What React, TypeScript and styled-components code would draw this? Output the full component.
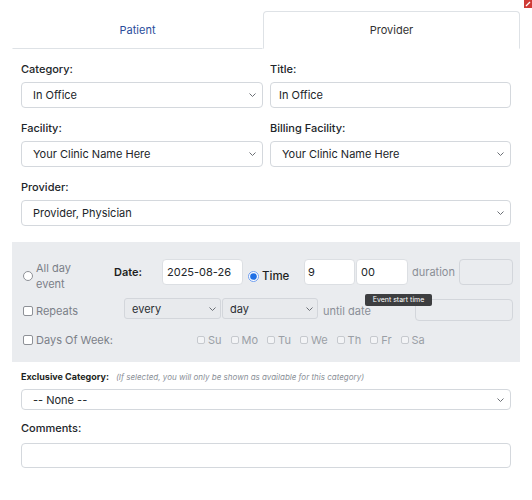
import React from "react";
import styled, { createGlobalStyle } from "styled-components";

const GlobalStyle = createGlobalStyle`
  body {
    margin: 0;
    background: #fff;
    font-family: Inter, "Helvetica Neue", Arial, sans-serif;
    color: #212529;
  }
`;

const Page = styled.div`
  position: relative;
  width: 532px;
  height: 500px;
  box-sizing: border-box;
  padding: 11px 12px 0;
  overflow: hidden;
`;

const CloseCorner = styled.div`
  position: absolute;
  top: 0;
  right: 0;
  width: 8px;
  height: 8px;
  background: #cf3b36;
  display: flex;
  align-items: center;
  justify-content: center;
`;

const TabBar = styled.div`
  display: grid;
  grid-template-columns: 251px 1fr;
`;

const Tab = styled.div<{ $active?: boolean }>`
  height: 38px;
  box-sizing: border-box;
  display: flex;
  align-items: center;
  justify-content: center;
  font-size: 11px;
  color: ${(p) => (p.$active ? "#333" : "#2a4d9c")};
  border: 1px solid ${(p) => (p.$active ? "#dee2e6" : "transparent")};
  border-bottom: 1px solid ${(p) => (p.$active ? "transparent" : "#dee2e6")};
  border-radius: 4px 4px 0 0;
`;

const Form = styled.div`
  padding: 11px 9px 0;
`;

const FieldGrid = styled.div`
  display: grid;
  grid-template-columns: 242px 241px;
  column-gap: 7px;
  row-gap: 11px;
`;

const Field = styled.div<{ $wide?: boolean }>`
  display: flex;
  flex-direction: column;
  gap: 3px;
  grid-column: ${(p) => (p.$wide ? "1 / -1" : "auto")};
`;

const Label = styled.label`
  font-size: 11px;
  line-height: 19px;
  font-weight: 500;
  color: #212529;
`;

const SelectBox = styled.div<{ $h?: number }>`
  height: ${(p) => p.$h ?? 26}px;
  box-sizing: border-box;
  display: flex;
  align-items: center;
  justify-content: space-between;
  padding: 0 6px 0 11px;
  border: 1px solid #d4d8dd;
  border-radius: 4px;
  background: #fff;
  font-size: 11px;
  color: #212529;
`;

const Input = styled.input<{ $pad?: number }>`
  height: 26px;
  box-sizing: border-box;
  width: 100%;
  margin: 0;
  padding: 0 ${(p) => p.$pad ?? 8}px;
  border: 1px solid #d4d8dd;
  border-radius: 4px;
  background: #fff;
  font-family: inherit;
  font-size: 11px;
  color: #212529;
  outline: none;
`;

const Recurrence = styled.div`
  margin: 16px -9px 0;
  padding: 17px 7px 13px 10px;
  background: #eaecef;
  display: flex;
  flex-direction: column;
`;

const Row = styled.div<{ $mt?: number; $center?: boolean }>`
  display: flex;
  align-items: ${(p) => (p.$center ? "center" : "flex-start")};
  margin-top: ${(p) => p.$mt ?? 0}px;
`;

const Choice = styled.div<{ $w: number; $pt?: number; $ml?: number }>`
  width: ${(p) => p.$w}px;
  flex: none;
  display: flex;
  align-items: center;
  gap: 3px;
  margin-left: ${(p) => p.$ml ?? 0}px;
  padding-top: ${(p) => p.$pt ?? 0}px;
  padding-left: 1px;
  box-sizing: border-box;
  font-size: 11px;
  line-height: 16px;
  color: #7b8088;
`;

const ChoiceText = styled.span<{ $strong?: boolean }>`
  color: ${(p) => (p.$strong ? "#1d1f22" : "#7b8088")};
  font-weight: ${(p) => (p.$strong ? 500 : 400)};
  font-size: ${(p) => (p.$strong ? "11.5px" : "11px")};
  line-height: 22px;
`;

const Radio = styled.span`
  width: 10px;
  height: 10px;
  flex: none;
  box-sizing: border-box;
  border: 1px solid #8e9197;
  border-radius: 50%;
  background: #fff;
`;

const Box = styled.span<{ $muted?: boolean }>`
  width: ${(p) => (p.$muted ? 8 : 10)}px;
  height: ${(p) => (p.$muted ? 8 : 10)}px;
  flex: none;
  box-sizing: border-box;
  border: 1px solid ${(p) => (p.$muted ? "#c6c9ce" : "#8e9197")};
  border-radius: 2px;
  background: ${(p) => (p.$muted ? "#f3f4f6" : "#fff")};
`;

const InlineLabel = styled.span<{ $w: number; $ml?: number; $bold?: boolean; $lh?: number; $pt?: number }>`
  width: ${(p) => p.$w}px;
  flex: none;
  margin-left: ${(p) => p.$ml ?? 0}px;
  padding-top: ${(p) => p.$pt ?? 0}px;
  font-size: 11px;
  line-height: ${(p) => p.$lh ?? 26}px;
  font-weight: ${(p) => (p.$bold ? 600 : 400)};
  color: ${(p) => (p.$bold ? "#1d1f22" : "#8a8f97")};
`;

const Cell = styled.div<{ $w: number; $ml?: number }>`
  position: relative;
  width: ${(p) => p.$w}px;
  flex: none;
  margin-left: ${(p) => p.$ml ?? 0}px;
`;

const SmallInput = styled(Input)<{ $off?: boolean; $h?: number }>`
  height: ${(p) => p.$h ?? 26}px;
  border-color: ${(p) => (p.$off ? "#d3d6db" : "#dcdfe3")};
  background: ${(p) => (p.$off ? "#eaecef" : "#fff")};
`;

const SmallSelect = styled(SelectBox)`
  height: 21px;
  padding: 0 4px 0 7px;
  border-color: #d3d6db;
  border-radius: 3px;
  background: #e8eaed;
  color: #2b2e33;
`;

const Tooltip = styled.div`
  position: absolute;
  z-index: 2;
  top: calc(100% + 9px);
  left: 9px;
  width: 67px;
  height: 12px;
  box-sizing: border-box;
  border-radius: 2px;
  background: #3d3e40;
  color: #fff;
  font-size: 7px;
  line-height: 12px;
  text-align: center;
  white-space: nowrap;
`;

const DayList = styled.div`
  display: flex;
  gap: 9px;
`;

const Day = styled.span`
  display: flex;
  align-items: center;
  gap: 3px;
  font-size: 11px;
  line-height: 18px;
  color: #9a9fa6;
`;

const NoteLine = styled.div`
  margin-top: 8px;
  line-height: 14px;
  display: flex;
  align-items: baseline;
  gap: 7px;
`;

const NoteLabel = styled.span`
  font-size: 9px;
  font-weight: 700;
  color: #1d1f22;
`;

const Note = styled.span`
  font-size: 8px;
  font-style: italic;
  color: #8a8f97;
`;

const Stack = styled.div<{ $mt: number; $gap: number }>`
  display: flex;
  flex-direction: column;
  gap: ${(p) => p.$gap}px;
  margin-top: ${(p) => p.$mt}px;
`;

const Comments = styled.textarea`
  height: 25px;
  box-sizing: border-box;
  margin: 0;
  border: 1px solid #d4d8dd;
  border-radius: 4px;
  resize: none;
  outline: none;
`;

const Chevron = () => (
  <svg width="7" height="4" viewBox="0 0 7 4">
    <polyline points="0.5,0.5 3.5,3.5 6.5,0.5" fill="none" stroke="#6b6f75" strokeWidth="1" />
  </svg>
);

const CheckedRadio = () => (
  <svg width="11" height="11" viewBox="0 0 11 11" style={{ flex: "none" }}>
    <circle cx="5.5" cy="5.5" r="5" fill="#fff" stroke="#6f9ef0" strokeWidth="1" />
    <circle cx="5.5" cy="5.5" r="3.3" fill="#1f6fe5" />
  </svg>
);

const Select = ({ value, h }: { value: string; h?: number }) => (
  <SelectBox $h={h}>
    <span>{value}</span>
    <Chevron />
  </SelectBox>
);

const days = ["Su", "Mo", "Tu", "We", "Th", "Fr", "Sa"];

export default function App() {
  return (
    <Page>
      <GlobalStyle />
      <CloseCorner>
        <svg width="6" height="6" viewBox="0 0 6 6">
          <path d="M1 5 L5 1" stroke="#fff" strokeWidth="1.2" />
        </svg>
      </CloseCorner>

      <TabBar>
        <Tab>Patient</Tab>
        <Tab $active>Provider</Tab>
      </TabBar>

      <Form>
        <FieldGrid>
          <Field>
            <Label>Category:</Label>
            <Select value="In Office" />
          </Field>
          <Field>
            <Label>Title:</Label>
            <Input defaultValue="In Office" />
          </Field>
          <Field>
            <Label>Facility:</Label>
            <Select value="Your Clinic Name Here" />
          </Field>
          <Field>
            <Label>Billing Facility:</Label>
            <Select value="Your Clinic Name Here" />
          </Field>
          <Field $wide>
            <Label>Provider:</Label>
            <Select value="Provider, Physician" />
          </Field>
        </FieldGrid>

        <Recurrence>
          <Row>
            <Choice $w={92} $pt={1}>
              <Radio />
              <span>
                All day
                <br />
                event
              </span>
            </Choice>
            <InlineLabel $w={48} $bold>
              Date:
            </InlineLabel>
            <Cell $w={81}>
              <SmallInput defaultValue="2025-08-26" $pad={4} />
            </Cell>
            <Choice $w={57} $pt={6} $ml={4}>
              <CheckedRadio />
              <ChoiceText $strong>Time</ChoiceText>
            </Choice>
            <Cell $w={51}>
              <SmallInput defaultValue="9" $pad={3} />
            </Cell>
            <Cell $w={52} $ml={1}>
              <SmallInput defaultValue="00" $pad={4} />
              <Tooltip>Event start time</Tooltip>
            </Cell>
            <InlineLabel $w={47} $ml={4}>
              duration
            </InlineLabel>
            <Cell $w={54}>
              <SmallInput $off />
            </Cell>
          </Row>

          <Row $mt={6}>
            <Choice $w={102} $pt={5}>
              <Box />
              <span>Repeats</span>
            </Choice>
            <Cell $w={97}>
              <SmallSelect>
                <span>every</span>
                <Chevron />
              </SmallSelect>
            </Cell>
            <Cell $w={96} $ml={1}>
              <SmallSelect>
                <span>day</span>
                <Chevron />
              </SmallSelect>
            </Cell>
            <InlineLabel $w={92} $ml={5} $lh={16} $pt={5}>
              until date
            </InlineLabel>
            <Cell $w={98}>
              <SmallInput $off $h={22} style={{ marginTop: -1 }} />
            </Cell>
          </Row>

          <Row $mt={10} $center>
            <Choice $w={175}>
              <Box />
              <span>Days Of Week:</span>
            </Choice>
            <DayList>
              {days.map((d) => (
                <Day key={d}>
                  <Box $muted />
                  {d}
                </Day>
              ))}
            </DayList>
          </Row>
        </Recurrence>

        <NoteLine>
          <NoteLabel>Exclusive Category:</NoteLabel>
          <Note>(If selected, you will only be shown as available for this category)</Note>
        </NoteLine>
        <Stack $mt={5} $gap={0}>
          <Select value="-- None --" h={21} />
        </Stack>

        <Stack $mt={9} $gap={5}>
          <Label>Comments:</Label>
          <Comments />
        </Stack>
      </Form>
    </Page>
  );
}
